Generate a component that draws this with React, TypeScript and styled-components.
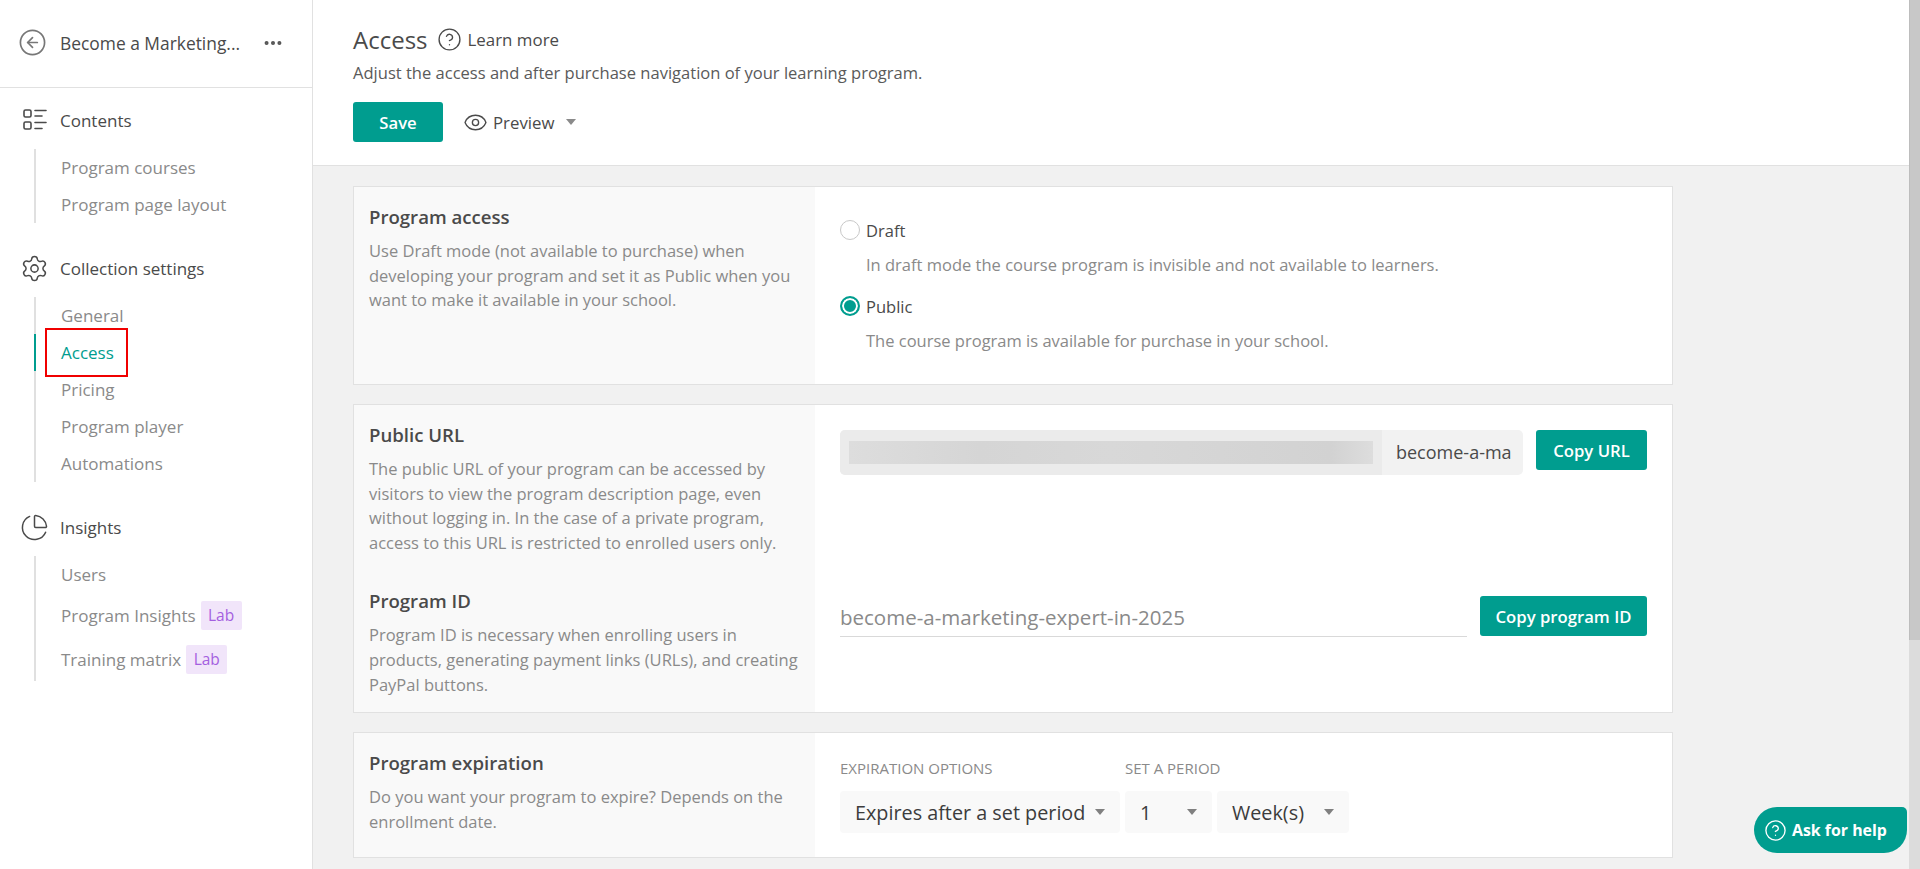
import React from "react";
import styled, { createGlobalStyle } from "styled-components";
import { CircleArrowLeft, Settings, ChartPie, CircleHelp, Eye, Ellipsis } from "lucide-react";

const TEAL = "#009d8f";
const FONT = `"Open Sans", "Noto Sans", "Liberation Sans", sans-serif`;

const Global = createGlobalStyle`
  html, body { margin: 0; padding: 0; height: 100%; overflow: hidden; }
  body { font-family: ${FONT}; color: #4a4a4a; background: #fff; }
  * { box-sizing: border-box; }
`;

const Page = styled.div`
  display: flex;
  height: 869px;
  width: 1920px;
  position: relative;
`;

const Sidebar = styled.aside`
  width: 313px;
  flex: none;
  border-right: 1px solid #e1e1e1;
  background: #fff;
`;

const SideTop = styled.div`
  height: 88px;
  border-bottom: 1px solid #e1e1e1;
  display: flex;
  align-items: center;
  padding: 0 28px 2px 18px;
`;

const SideTitle = styled.div`
  flex: 1;
  margin-left: 13px;
  font-size: 17.4px;
  font-weight: 500;
  white-space: nowrap;
  color: #4a4a4a;
`;

const Nav = styled.nav`
  padding-top: 15px;
`;

const Group = styled.section`
  margin-bottom: 28px;
`;

const GroupHead = styled.div`
  display: flex;
  align-items: center;
  height: 34px;
  padding-left: 20px;
  font-size: 17px;
  font-weight: 500;
  color: #4a4a4a;
  svg { flex: none; }
`;

const GroupLabel = styled.span`
  margin-left: 11px;
`;

const SubList = styled.ul`
  list-style: none;
  margin: 12px 0 0 34px;
  padding: 0;
  border-left: 2px solid #e0e0e0;
`;

const SubItem = styled.li<{ $active?: boolean; $tall?: boolean }>`
  position: relative;
  height: ${(p) => (p.$tall ? "44px" : "37px")};
  display: flex;
  align-items: center;
  padding-left: 25px;
  font-size: 17px;
  font-weight: 500;
  white-space: nowrap;
  color: ${(p) => (p.$active ? TEAL : "#8a8a8a")};
  &::before {
    content: "";
    display: ${(p) => (p.$active ? "block" : "none")};
    position: absolute;
    left: -2px;
    top: 0;
    bottom: 0;
    width: 2px;
    background: ${TEAL};
  }
`;

const Lab = styled.span`
  margin-left: 5px;
  height: 29px;
  width: 41px;
  display: inline-flex;
  align-items: center;
  justify-content: center;
  border-radius: 2px;
  background: #f1e5fa;
  color: #a45fe0;
  font-size: 15.5px;
  font-weight: 400;
`;

const Highlight = styled.div`
  position: absolute;
  left: 45px;
  top: 328px;
  width: 83px;
  height: 49px;
  border: 2px solid #f00000;
  pointer-events: none;
`;

const Main = styled.main`
  flex: 1;
  min-width: 0;
  display: flex;
  flex-direction: column;
  overflow: hidden;
  background: #f1f1f1;
`;

const Header = styled.header`
  flex: none;
  height: 166px;
  background: #fff;
  border-bottom: 1px solid #e1e1e1;
  padding: 22px 0 0 40px;
`;

const TitleRow = styled.div`
  display: flex;
  align-items: center;
  height: 34px;
`;

const PageTitle = styled.h1`
  margin: 0;
  font-size: 24px;
  font-weight: 400;
  color: #4a4a4a;
`;

const LearnMore = styled.a`
  display: flex;
  align-items: center;
  margin-left: 9px;
  gap: 6px;
  font-size: 16.9px;
  font-weight: 500;
  color: #4a4a4a;
`;

const Subtitle = styled.p`
  margin: 5px 0 0;
  font-size: 16.55px;
  line-height: 24px;
  color: #5a5a5a;
`;

const Actions = styled.div`
  display: flex;
  align-items: center;
  margin-top: 17px;
`;

const Primary = styled.button<{ $w: number; $h?: number }>`
  flex: none;
  width: ${(p) => p.$w}px;
  height: ${(p) => p.$h ?? 40}px;
  border: 0;
  border-radius: 3px;
  background: ${TEAL};
  color: #fff;
  font-family: ${FONT};
  font-size: 16.7px;
  font-weight: 600;
  padding: 0;
`;

const Preview = styled.div`
  display: flex;
  align-items: center;
  margin-left: 20px;
  gap: 5px;
  font-size: 16.8px;
  font-weight: 500;
  color: #4a4a4a;
`;

const PreviewCaret = styled.span`
  flex: none;
  margin-left: 7px;
  width: 0;
  height: 0;
  border-left: 5px solid transparent;
  border-right: 5px solid transparent;
  border-top: 6px solid #8a8a8a;
`;

const Caret = styled.span`
  flex: none;
  display: inline-block;
  width: 0;
  height: 0;
  border-left: 5px solid transparent;
  border-right: 5px solid transparent;
  border-top: 6px solid #808080;
`;

const Content = styled.div`
  flex: 1;
  padding: 20px 0 0 40px;
  display: flex;
  flex-direction: column;
  gap: 19px;
`;

const Card = styled.div<{ $h: number }>`
  flex: none;
  width: 1320px;
  height: ${(p) => p.$h}px;
  display: flex;
  background: #fff;
  border: 1px solid #e1e1e1;
`;

const Left = styled.div`
  flex: none;
  width: 461px;
  padding: 16px 12px 0 15px;
  background: #f9f9f9;
`;

const Right = styled.div`
  flex: 1;
  min-width: 0;
  padding-left: 25px;
  padding-right: 25px;
`;

const CardTitle = styled.h3<{ $mt?: number }>`
  margin: ${(p) => p.$mt ?? 0}px 0 0;
  font-size: 18.6px;
  line-height: 28px;
  font-weight: 600;
  color: #4a4a4a;
`;

const CardText = styled.p`
  margin: 8px 0 0;
  font-size: 16.5px;
  line-height: 24.6px;
  color: #8a8a8a;
`;

const RadioRow = styled.div<{ $mt: number }>`
  display: flex;
  align-items: center;
  margin-top: ${(p) => p.$mt}px;
  height: 22px;
  font-size: 16.5px;
  color: #4a4a4a;
  gap: 6px;
`;

const Radio = styled.span<{ $on?: boolean }>`
  flex: none;
  width: 20px;
  height: 20px;
  border-radius: 50%;
  border: ${(p) => (p.$on ? `2px solid ${TEAL}` : "1px solid #c8c8c8")};
  background: ${(p) => (p.$on ? TEAL : "#fff")};
  box-shadow: ${(p) => (p.$on ? "inset 0 0 0 2px #fff" : "none")};
`;

const RadioHelp = styled.div<{ $mt: number }>`
  margin: ${(p) => p.$mt}px 0 0 26px;
  font-size: 16.5px;
  line-height: 24px;
  color: #8a8a8a;
`;

const FieldRow = styled.div<{ $mt: number }>`
  display: flex;
  align-items: flex-start;
  gap: 13px;
  margin-top: ${(p) => p.$mt}px;
`;

const UrlBox = styled.div`
  flex: 1;
  min-width: 0;
  height: 45px;
  display: flex;
  border-radius: 5px;
  overflow: hidden;
  background: #f2f2f2;
`;

const UrlPrefix = styled.div`
  flex: none;
  width: 542px;
  padding: 11px 9px;
  background: #ebebeb;
  overflow: hidden;
`;

const Blur = styled.div`
  height: 23px;
  background: linear-gradient(90deg, #dddddd 0%, #d5d5d5 25%, #d8d8d8 50%, #d2d2d2 92%, #dddddd 100%);
`;

const UrlValue = styled.div`
  flex: 1;
  padding-left: 14px;
  font-size: 18px;
  line-height: 45px;
  color: #4a4a4a;
  white-space: nowrap;
  overflow: hidden;
`;

const IdInput = styled.div`
  flex: 1;
  height: 41px;
  border-bottom: 1px solid #d9d9d9;
  font-size: 20.5px;
  line-height: 42px;
  color: #8a8a8a;
  white-space: nowrap;
`;

const SelectLabels = styled.div`
  display: flex;
  margin-top: 26px;
  font-size: 15px;
  font-weight: 500;
  line-height: 18px;
  color: #8a8a8a;
  white-space: nowrap;
`;

const SelectLabel = styled.span<{ $w: number }>`
  width: ${(p) => p.$w}px;
`;

const Selects = styled.div`
  display: flex;
  margin-top: 14px;
  gap: 5px;
`;

const Select = styled.div<{ $w: number }>`
  flex: none;
  width: ${(p) => p.$w}px;
  height: 42px;
  display: flex;
  align-items: center;
  justify-content: space-between;
  padding: 0 15px;
  border-radius: 4px;
  background: #f9f9f9;
  font-size: 19.8px;
  color: #3c3c3c;
  white-space: nowrap;
`;

const ScrollTrack = styled.div`
  flex: none;
  width: 11px;
  background: #dcdcdc;
`;

const ScrollThumb = styled.div`
  height: 640px;
  background: #c8c8c8;
  border-left: 1px solid #bdbdbd;
`;

const Help = styled.div`
  position: absolute;
  left: 1754px;
  top: 807px;
  width: 153px;
  height: 46px;
  display: flex;
  align-items: center;
  gap: 5px;
  padding-left: 10px;
  border-radius: 23px 5px 23px 23px;
  background: ${TEAL};
  color: #fff;
  font-size: 15.9px;
  font-weight: 700;
`;

const ListIcon = () => (
  <svg width="29" height="26" viewBox="0 0 29 26" fill="none" stroke="#4a4a4a" strokeWidth="1.6" strokeLinecap="round">
    <rect x="4" y="3" width="7" height="7" rx="1.5" />
    <rect x="4" y="15" width="7" height="7" rx="1.5" />
    <path d="M15 3.5h11M15 9h7M15 15.5h11M15 21.5h7" />
  </svg>
);

export default function App() {
  return (
    <>
      <Global />
      <Page>
        <Sidebar>
          <SideTop>
            <CircleArrowLeft size={29} strokeWidth={1.4} color="#777" />
            <SideTitle>Become a Marketing...</SideTitle>
            <Ellipsis size={22} strokeWidth={2.4} color="#555" />
          </SideTop>
          <Nav>
            <Group>
              <GroupHead>
                <ListIcon />
                <GroupLabel>Contents</GroupLabel>
              </GroupHead>
              <SubList>
                <SubItem>Program courses</SubItem>
                <SubItem>Program page layout</SubItem>
              </SubList>
            </Group>
            <Group>
              <GroupHead>
                <Settings size={29} strokeWidth={1.25} color="#4a4a4a" />
                <GroupLabel>Collection settings</GroupLabel>
              </GroupHead>
              <SubList>
                <SubItem>General</SubItem>
                <SubItem $active>Access</SubItem>
                <SubItem>Pricing</SubItem>
                <SubItem>Program player</SubItem>
                <SubItem>Automations</SubItem>
              </SubList>
            </Group>
            <Group>
              <GroupHead>
                <ChartPie size={29} strokeWidth={1.25} color="#4a4a4a" />
                <GroupLabel>Insights</GroupLabel>
              </GroupHead>
              <SubList>
                <SubItem>Users</SubItem>
                <SubItem $tall>
                  Program Insights<Lab>Lab</Lab>
                </SubItem>
                <SubItem $tall>
                  Training matrix<Lab>Lab</Lab>
                </SubItem>
              </SubList>
            </Group>
          </Nav>
        </Sidebar>
        <Highlight />
        <Main>
          <Header>
            <TitleRow>
              <PageTitle>Access</PageTitle>
              <LearnMore>
                <CircleHelp size={25} strokeWidth={1.3} />
                Learn more
              </LearnMore>
            </TitleRow>
            <Subtitle>Adjust the access and after purchase navigation of your learning program.</Subtitle>
            <Actions>
              <Primary $w={90}>Save</Primary>
              <Preview>
                <Eye size={25} strokeWidth={1.3} />
                Preview
                <PreviewCaret />
              </Preview>
            </Actions>
          </Header>
          <Content>
            <Card $h={199}>
              <Left>
                <CardTitle>Program access</CardTitle>
                <CardText>
                  Use Draft mode (not available to purchase) when developing your program and set it as Public when you want to make it available in your school.
                </CardText>
              </Left>
              <Right>
                <RadioRow $mt={32}>
                  <Radio />
                  Draft
                </RadioRow>
                <RadioHelp $mt={12}>In draft mode the course program is invisible and not available to learners.</RadioHelp>
                <RadioRow $mt={18}>
                  <Radio $on />
                  Public
                </RadioRow>
                <RadioHelp $mt={12}>The course program is available for purchase in your school.</RadioHelp>
              </Right>
            </Card>
            <Card $h={309}>
              <Left>
                <CardTitle>Public URL</CardTitle>
                <CardText>
                  The public URL of your program can be accessed by visitors to view the program description page, even without logging in. In the case of a private program, access to this URL is restricted to enrolled users only.
                </CardText>
                <CardTitle $mt={32}>Program ID</CardTitle>
                <CardText>
                  Program ID is necessary when enrolling users in products, generating payment links (URLs), and creating PayPal buttons.
                </CardText>
              </Left>
              <Right>
                <FieldRow $mt={25}>
                  <UrlBox>
                    <UrlPrefix>
                      <Blur />
                    </UrlPrefix>
                    <UrlValue>become-a-ma</UrlValue>
                  </UrlBox>
                  <Primary $w={111}>Copy URL</Primary>
                </FieldRow>
                <FieldRow $mt={121}>
                  <IdInput>become-a-marketing-expert-in-2025</IdInput>
                  <Primary $w={167}>Copy program ID</Primary>
                </FieldRow>
              </Right>
            </Card>
            <Card $h={126}>
              <Left>
                <CardTitle>Program expiration</CardTitle>
                <CardText>Do you want your program to expire? Depends on the enrollment date.</CardText>
              </Left>
              <Right>
                <SelectLabels>
                  <SelectLabel $w={285}>EXPIRATION OPTIONS</SelectLabel>
                  <SelectLabel $w={120}>SET A PERIOD</SelectLabel>
                </SelectLabels>
                <Selects>
                  <Select $w={280}>
                    Expires after a set period
                    <Caret />
                  </Select>
                  <Select $w={87}>
                    1
                    <Caret />
                  </Select>
                  <Select $w={132}>
                    Week(s)
                    <Caret />
                  </Select>
                </Selects>
              </Right>
            </Card>
          </Content>
        </Main>
        <ScrollTrack>
          <ScrollThumb />
        </ScrollTrack>
        <Help>
          <CircleHelp size={23} strokeWidth={1.4} />
          Ask for help
        </Help>
      </Page>
    </>
  );
}
